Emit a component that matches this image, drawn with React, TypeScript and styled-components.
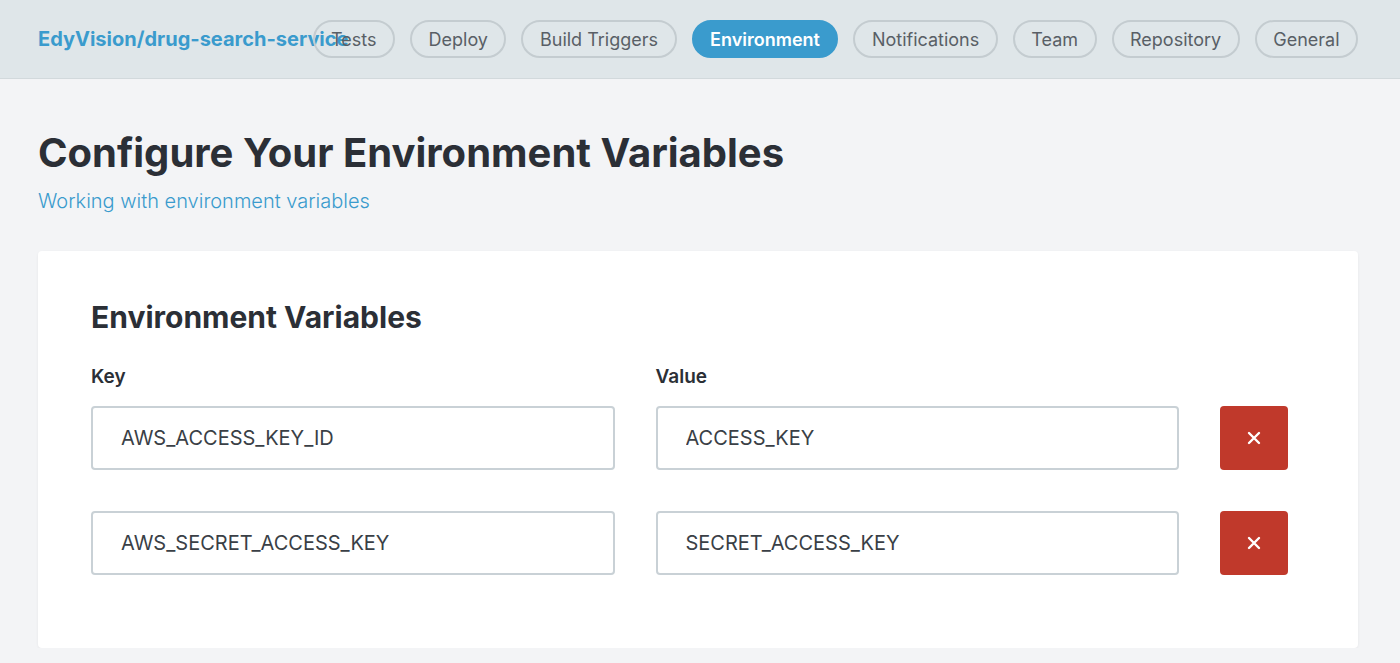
import React from "react";
import styled, { createGlobalStyle } from "styled-components";

const GlobalStyle = createGlobalStyle`
  html, body {
    margin: 0;
    padding: 0;
    background: #f3f4f6;
    font-family: Inter, Roboto, "Liberation Sans", sans-serif;
  }
`;

const Header = styled.header`
  display: flex;
  align-items: center;
  height: 78px;
  padding: 0 42px 0 38px;
  background: #dfe6e9;
  border-bottom: 1px solid #d2d9dc;
`;

const RepoName = styled.a`
  width: 0;
  white-space: nowrap;
  font-size: 20px;
  font-weight: 700;
  color: #3a9bcd;
  text-decoration: none;
`;

const Tabs = styled.nav`
  display: flex;
  gap: 15px;
  margin-left: auto;
`;

const Tab = styled.button<{ $active?: boolean }>`
  height: 38px;
  padding: 0 16.5px;
  border-radius: 19px;
  border: 2px solid ${(p) => (p.$active ? "#3a9bcd" : "#c4ccd0")};
  background: ${(p) => (p.$active ? "#3a9bcd" : "transparent")};
  color: ${(p) => (p.$active ? "#ffffff" : "#595f66")};
  font-family: inherit;
  font-size: 18px;
  font-weight: ${(p) => (p.$active ? 600 : 400)};
  cursor: pointer;
`;

const Main = styled.main`
  padding: 0 42px 0 38px;
`;

const Title = styled.h1`
  margin: 0;
  padding-top: 48px;
  font-size: 40px;
  line-height: 52px;
  font-weight: 700;
  color: #2b2f36;
`;

const DocsLink = styled.a`
  display: block;
  margin-top: 10px;
  font-size: 20px;
  font-weight: 300;
  color: #3a9bcd;
  text-decoration: none;
`;

const Card = styled.section`
  margin-top: 38px;
  padding: 46px 70px 73px 53px;
  background: #ffffff;
  border-radius: 4px;
  box-shadow: 0 1px 3px rgba(0, 0, 0, 0.06);
`;

const CardTitle = styled.h2`
  margin: 0 0 28px;
  font-size: 30px;
  line-height: 40px;
  font-weight: 700;
  color: #2b2f36;
`;

const Grid = styled.div`
  display: grid;
  grid-template-columns: 1fr 1fr 68px;
  column-gap: 41px;
  row-gap: 41px;
`;

const Label = styled.div`
  font-size: 19px;
  font-weight: 600;
  color: #2b2f36;
  margin-bottom: -27px;
`;

const Input = styled.input`
  box-sizing: border-box;
  width: 100%;
  height: 64px;
  padding: 0 28px;
  border: 2px solid #c9d1d6;
  border-radius: 4px;
  font-family: inherit;
  font-size: 20px;
  color: #3a3f46;
  background: #fff;
  outline: none;
`;

const DeleteButton = styled.button`
  height: 64px;
  border: none;
  border-radius: 4px;
  background: #c0392b;
  color: #fff;
  display: flex;
  align-items: center;
  justify-content: center;
  cursor: pointer;
`;

const tabs = [
  "Tests",
  "Deploy",
  "Build Triggers",
  "Environment",
  "Notifications",
  "Team",
  "Repository",
  "General",
];

const vars = [
  { key: "AWS_ACCESS_KEY_ID", value: "ACCESS_KEY" },
  { key: "AWS_SECRET_ACCESS_KEY", value: "SECRET_ACCESS_KEY" },
];

const CloseIcon = () => (
  <svg width="14" height="14" viewBox="0 0 14 14">
    <path d="M2 2L12 12M12 2L2 12" stroke="#fff" strokeWidth="2.4" strokeLinecap="round" />
  </svg>
);

const App = () => {
  return (
    <>
      <GlobalStyle />
      <Header>
        <RepoName href="#">EdyVision/drug-search-service</RepoName>
        <Tabs>
          {tabs.map((t) => (
            <Tab key={t} $active={t === "Environment"}>
              {t}
            </Tab>
          ))}
        </Tabs>
      </Header>
      <Main>
        <Title>Configure Your Environment Variables</Title>
        <DocsLink href="#">Working with environment variables</DocsLink>
        <Card>
          <CardTitle>Environment Variables</CardTitle>
          <Grid>
            <Label>Key</Label>
            <Label>Value</Label>
            <div />
            {vars.map((v) => (
              <React.Fragment key={v.key}>
                <Input defaultValue={v.key} />
                <Input defaultValue={v.value} />
                <DeleteButton aria-label="Remove">
                  <CloseIcon />
                </DeleteButton>
              </React.Fragment>
            ))}
          </Grid>
        </Card>
      </Main>
    </>
  );
};

export default App;
